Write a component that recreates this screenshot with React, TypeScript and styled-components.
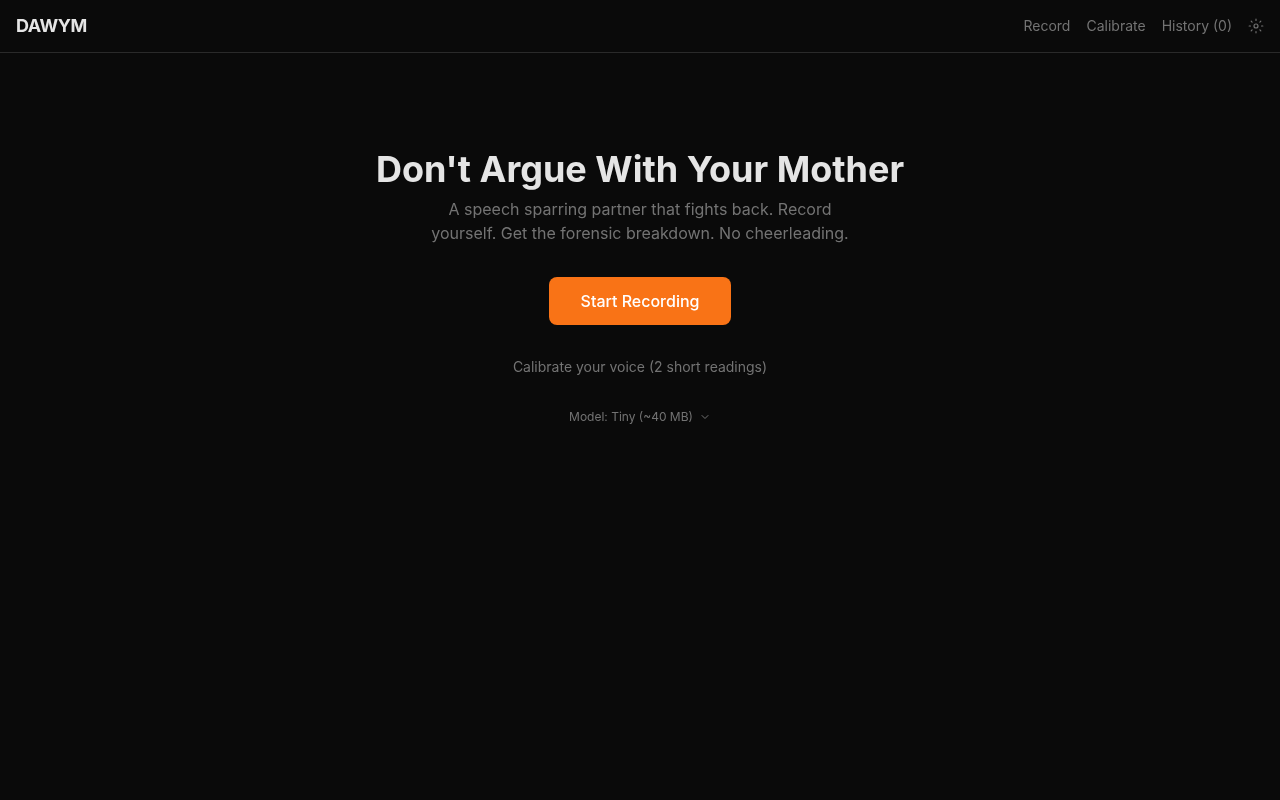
import { FC } from 'react';
import styled, { createGlobalStyle } from 'styled-components';
import { ChevronDown } from 'lucide-react';

const GlobalStyle = createGlobalStyle`
    html, body {
        margin: 0;
        padding: 0;
        background: #0a0a0a;
    }
    body {
        font-family: Inter, "Liberation Sans", sans-serif;
        color: #e5e5e5;
        -webkit-font-smoothing: antialiased;
    }
`;

const Page = styled.div`
    min-height: 100vh;
    display: flex;
    flex-direction: column;
    will-change: transform;
`;

const Header = styled.header`
    height: 52px;
    display: flex;
    align-items: center;
    justify-content: space-between;
    padding: 0 16px;
    border-bottom: 1px solid #2a2a2a;
`;

const Logo = styled.div`
    font-size: 18px;
    line-height: 28px;
    font-weight: 700;
    letter-spacing: -0.45px;
    color: #e5e5e5;
`;

const Nav = styled.nav`
    display: flex;
    align-items: center;
    gap: 16px;
`;

const NavLink = styled.a`
    font-size: 14px;
    line-height: 20px;
    color: #737373;
    cursor: pointer;
`;

const ThemeButton = styled.button`
    display: flex;
    padding: 0;
    border: none;
    background: none;
    color: #737373;
    cursor: pointer;
`;

const Main = styled.main`
    display: flex;
    flex-direction: column;
    align-items: center;
    padding-top: 96px;
`;

const Title = styled.h1`
    margin: 0;
    font-size: 36px;
    line-height: 40px;
    font-weight: 700;
    color: #e5e5e5;
`;

const Tagline = styled.p`
    margin: 8px 0 0;
    width: 448px;
    font-size: 16px;
    line-height: 24px;
    text-align: center;
    color: #737373;
`;

const RecordButton = styled.button`
    margin-top: 32px;
    height: 48px;
    padding: 0 32px;
    border: none;
    border-radius: 8px;
    background: #f97316;
    color: #fff;
    font-family: inherit;
    font-size: 16px;
    font-weight: 500;
    cursor: pointer;
`;

const CalibrateLink = styled.a`
    margin-top: 32px;
    font-size: 14px;
    line-height: 20px;
    color: #737373;
    cursor: pointer;
`;

const ModelPicker = styled.button`
    margin-top: 32px;
    display: flex;
    align-items: center;
    gap: 6px;
    padding: 0;
    border: none;
    background: none;
    font-family: inherit;
    font-size: 12px;
    line-height: 16px;
    color: #737373;
    cursor: pointer;
`;

const SunIcon: FC = () => (
    <svg
        width="16"
        height="16"
        viewBox="0 0 24 24"
        fill="none"
        stroke="currentColor"
        strokeWidth="1.75"
        strokeLinecap="round"
        strokeLinejoin="round"
    >
        <circle cx="12" cy="12" r="3" />
        <path d="M12 1.75v2M12 20.25v2M4.75 4.75l1.4 1.4M17.85 17.85l1.4 1.4M1.75 12h2M20.25 12h2M4.75 19.25l1.4-1.4M17.85 6.15l1.4-1.4" />
    </svg>
);

const App: FC = () => {
    return (
        <Page>
            <GlobalStyle />
            <Header>
                <Logo>DAWYM</Logo>
                <Nav>
                    <NavLink>Record</NavLink>
                    <NavLink>Calibrate</NavLink>
                    <NavLink>History (0)</NavLink>
                    <ThemeButton aria-label="Toggle theme">
                        <SunIcon />
                    </ThemeButton>
                </Nav>
            </Header>
            <Main>
                <Title>Don't Argue With Your Mother</Title>
                <Tagline>
                    A speech sparring partner that fights back. Record yourself. Get the forensic breakdown. No
                    cheerleading.
                </Tagline>
                <RecordButton>Start Recording</RecordButton>
                <CalibrateLink>Calibrate your voice (2 short readings)</CalibrateLink>
                <ModelPicker>
                    Model: Tiny (~40 MB)
                    <ChevronDown size={12} />
                </ModelPicker>
            </Main>
        </Page>
    );
};

export default App;
